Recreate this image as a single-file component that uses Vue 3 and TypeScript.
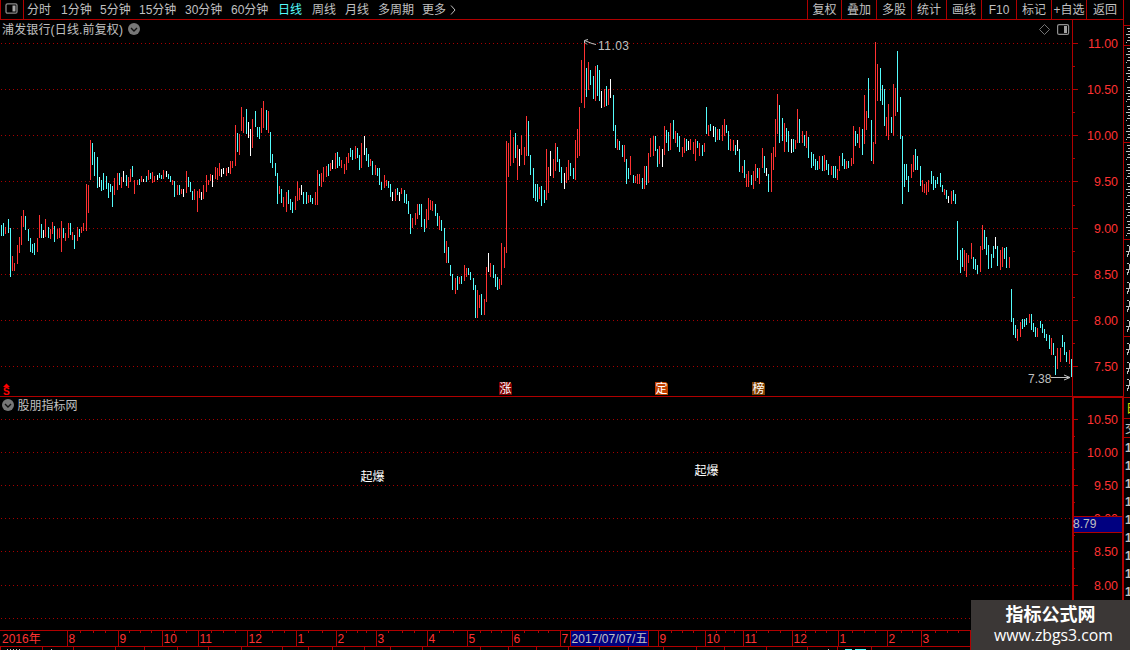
<script setup lang="ts">
interface Label { x: number; text: string }
type Tone = 'r' | 'c' | 'w'

// Each bar: x, high, low, tone
const series = `1 225 236 c,3 223 236 c,5 227 234 r,8 219 233 c,10 228 277 c,12 256 271 r,14 263 271 r,17 245 264 r,19 237 253 r,21 216 245 r,23 210 227 r,25 216 230 c,28 229 241 c,30 238 252 c,32 244 253 c,34 243 255 c,37 238 252 r,39 215 238 r,41 224 238 c,43 230 238 w,45 219 237 r,48 227 238 c,50 229 239 r,52 222 234 r,54 226 242 c,57 229 239 r,59 228 238 r,61 221 252 r,63 228 238 c,65 233 241 r,68 223 238 r,70 223 235 c,72 232 240 r,74 235 249 c,77 227 241 r,79 229 237 c,81 227 233 r,83 223 231 r,86 184 231 r,88 185 213 r,90 140 180 r,92 143 165 c,94 152 176 c,97 157 188 c,99 177 187 w,101 180 191 c,103 173 190 c,106 176 189 c,108 183 198 c,110 184 192 c,112 186 207 c,114 178 195 r,117 173 190 r,119 173 185 c,121 177 188 r,123 171 182 w,126 175 186 c,128 177 188 r,130 169 182 r,132 166 177 c,134 180 194 r,137 180 185 r,139 179 185 c,141 176 182 r,143 179 182 w,146 176 182 c,148 170 180 r,150 173 179 c,152 172 183 r,154 176 182 r,157 175 180 w,159 173 178 c,161 175 179 c,163 170 179 r,166 171 177 w,168 174 179 c,170 176 182 c,172 180 185 r,174 181 197 c,177 185 195 r,179 185 195 c,181 189 194 r,183 189 197 w,186 171 193 r,188 177 187 c,190 182 192 c,192 191 200 c,194 189 200 r,197 191 212 r,199 189 198 r,201 192 200 w,203 185 199 r,206 175 192 r,208 180 185 r,210 174 181 r,212 175 187 w,215 167 179 r,217 168 180 r,219 163 176 r,221 169 177 w,223 168 174 w,226 168 176 r,228 167 173 w,230 161 174 r,232 161 168 r,235 125 166 r,237 133 152 c,239 134 155 r,
241 107 131 r,243 117 133 r,246 109 134 c,248 122 138 w,250 129 156 w,252 119 148 r,255 111 127 c,257 127 137 c,259 127 139 c,261 108 133 r,263 101 128 r,266 110 130 c,268 111 133 r,270 132 163 c,272 154 168 c,275 163 176 c,277 173 204 c,279 186 194 r,281 189 203 c,283 197 207 r,286 192 212 r,288 190 204 c,290 199 210 c,292 202 213 c,295 196 210 r,297 181 201 r,299 188 200 r,301 185 195 w,303 192 204 c,306 192 204 c,308 195 203 r,310 195 202 c,312 198 204 c,315 192 205 r,317 170 205 r,319 174 186 c,321 173 187 r,323 167 182 r,326 166 177 r,328 164 176 c,330 163 171 r,332 160 169 w,335 153 169 r,337 152 168 c,339 157 166 c,341 160 168 r,344 164 174 r,346 157 170 r,348 153 163 r,350 148 157 c,352 150 160 c,355 146 159 r,357 148 158 c,359 155 170 c,361 143 168 r,364 136 155 w,366 148 161 c,368 154 167 c,370 159 166 r,372 161 175 c,375 165 175 r,377 168 176 c,379 168 185 c,381 182 190 c,384 175 188 r,386 180 186 r,388 181 188 c,390 184 197 c,392 192 201 w,395 189 201 r,397 188 195 c,399 192 201 w,401 188 194 r,404 190 203 c,406 194 204 c,408 201 214 c,410 214 234 c,412 218 228 r,415 213 225 r,417 204 219 r,419 204 215 c,421 204 227 c,424 219 232 c,426 209 228 r,428 198 220 r,430 200 210 r,432 201 211 r,435 204 216 c,437 213 226 c,439 216 230 r,441 220 231 c,444 228 253 c,
446 241 263 r,448 247 263 c,450 265 276 c,452 274 290 c,455 278 294 r,457 276 290 c,459 277 284 r,461 276 284 c,464 265 281 r,466 268 277 r,468 268 275 c,470 272 280 c,473 278 290 c,475 285 318 c,477 290 318 r,479 295 308 r,481 294 315 c,484 299 315 r,486 267 302 r,488 253 272 w,490 263 277 r,493 265 278 c,495 274 287 c,497 277 290 c,499 279 289 r,501 243 285 r,504 247 268 r,506 141 253 r,508 143 177 r,510 130 166 r,513 137 163 r,515 133 158 c,517 145 180 r,519 149 166 w,521 135 155 r,524 147 165 r,526 116 156 r,528 121 156 c,530 155 175 c,533 168 198 c,535 184 201 c,537 184 202 c,539 187 199 r,541 186 206 c,544 190 203 c,546 149 200 r,548 167 193 r,550 151 176 w,553 159 178 r,555 143 171 r,557 147 162 c,559 159 172 c,561 167 183 c,564 173 189 w,566 167 183 r,568 160 180 r,570 163 176 c,573 168 179 c,575 140 180 r,577 129 158 r,579 107 156 r,
581 60 103 r,584 41 108 r,586 68 97 c,588 62 90 r,590 70 85 c,593 76 99 c,595 66 101 r,597 65 96 c,599 70 101 c,601 91 108 w,604 89 107 r,606 86 106 c,608 89 105 r,610 79 98 w,613 95 131 c,615 125 148 c,617 139 150 r,619 141 150 c,622 145 157 c,624 145 162 r,626 159 184 c,628 168 179 c,630 156 175 r,633 175 183 c,635 176 183 r,637 174 184 r,639 174 184 r,642 178 189 c,644 166 189 r,646 166 185 c,648 153 183 r,650 138 157 r,653 136 156 r,655 136 151 c,657 149 167 c,659 146 164 r,662 149 167 w,664 126 155 r,666 130 143 c,668 132 151 c,670 123 150 r,673 120 139 c,675 131 143 r,677 133 147 c,679 136 152 c,682 147 157 r,684 138 153 r,686 139 151 c,688 141 150 w,690 139 150 r,693 142 154 r,695 139 161 r,697 141 148 c,699 143 156 r,702 145 156 c,704 143 152 r,706 107 134 c,708 125 136 r,710 124 131 c,713 126 137 w,715 127 142 c,717 129 140 r,719 129 140 c,722 125 141 r,724 119 136 r,726 125 133 c,728 131 150 c,730 139 151 r,733 140 151 r,735 145 155 c,737 140 151 w,739 149 172 c,742 166 173 r,744 160 178 c,746 174 187 r,748 171 187 r,751 175 185 c,753 171 189 r,755 164 181 r,757 168 178 c,759 168 184 r,762 148 168 r,764 156 173 c,766 168 176 w,768 174 192 c,771 153 192 r,773 147 170 r,775 119 157 r,777 94 134 r,779 105 143 c,
782 118 141 c,784 123 152 r,786 128 142 c,788 131 152 c,791 139 153 w,793 139 152 c,795 140 149 r,797 109 143 r,799 119 143 c,802 131 143 r,804 135 146 c,806 131 148 r,808 137 158 c,811 152 168 c,813 154 166 c,815 159 170 c,817 161 170 c,819 156 169 r,822 156 171 c,824 155 171 r,826 160 170 c,828 164 175 c,831 166 175 r,833 166 178 c,835 166 178 c,837 169 180 r,839 156 171 r,842 153 166 c,844 159 169 c,846 161 169 r,848 161 168 c,851 158 166 r,853 126 164 r,855 131 146 c,857 134 143 c,859 127 148 r,862 129 155 c,864 95 144 r,866 111 130 r,868 78 118 c,871 120 161 c,873 142 164 r,875 42 144 r,877 64 101 r,880 68 101 c,882 85 105 c,884 89 126 c,886 117 136 r,888 104 140 r,891 117 133 c,893 84 136 r,895 88 116 r,897 51 112 c,900 97 139 c,902 136 204 c,904 164 187 c,906 164 180 c,908 176 192 c,911 164 178 r,913 155 172 r,915 149 170 c,917 156 170 c,920 166 186 c,922 180 192 r,924 184 193 r,926 182 195 r,928 180 192 r,931 171 184 c,933 176 190 c,935 180 188 c,937 177 184 c,940 173 187 c,942 185 192 c,944 189 195 r,946 190 199 c,948 196 203 w,951 191 204 r,953 190 201 c,955 194 204 c,
957 221 260 c,960 250 273 c,962 248 267 c,964 250 271 r,966 253 277 r,968 255 263 r,971 243 259 r,973 257 269 c,975 259 270 c,977 265 274 c,980 246 272 r,982 225 250 r,984 230 249 c,986 237 255 c,988 245 269 c,991 254 268 c,993 246 258 c,995 237 249 w,997 246 266 c,1000 250 270 r,1002 247 267 r,1004 248 259 c,1006 247 268 c,1009 257 268 r,1011 289 322 c,1013 318 335 c,1015 325 338 c,1017 329 341 r,1020 322 337 r,1022 319 329 c,1024 319 327 c,1026 318 325 c,1029 314 323 r,1031 314 330 c,1033 323 332 c,1035 327 337 c,1037 328 337 r,1040 321 328 c,1042 324 333 c,1044 329 338 c,1046 334 341 c,1049 335 349 c,1051 338 355 r,1053 343 355 c,1055 356 375 c,1057 348 369 r,1060 348 362 r,1062 335 347 c,1064 342 355 c,1066 352 362 c,1069 350 364 r,1071 359 377 c`
const bars = series.split(',').map(s => {
  const [x, y1, y2, tone] = s.trim().split(' ')
  return { x: Number(x), y1: Number(y1), y2: Number(y2), tone: tone as Tone }
})
const barPath = (tone: Tone): string =>
  bars.filter(b => b.tone === tone).map(b => `M${b.x} ${b.y1}h1V${b.y2}h-1z`).join('')

const tones: Tone[] = ['r', 'c', 'w']
const periods = ['分时', '1分钟', '5分钟', '15分钟', '30分钟', '60分钟', '日线', '周线', '月线', '多周期', '更多']
const tools = ['复权', '叠加', '多股', '统计', '画线', 'F10', '标记', '+自选', '返回']

const upperGrid = [43, 89, 135, 181, 228, 274, 320, 366]
const upperPrices = ['11.00', '10.50', '10.00', '9.50', '9.00', '8.50', '8.00', '7.50']
const lowerGrid = [419, 452, 485, 518, 551, 585, 618]
const lowerPrices = ['10.50', '10.00', '9.50', '9.00', '8.50', '8.00']
const minorTicks = [66, 112, 158, 205, 251, 297, 343, 436, 469, 502, 535, 568]

const months: Label[] = [
  { x: 67, text: '8' }, { x: 118, text: '9' }, { x: 162, text: '10' }, { x: 198, text: '11' },
  { x: 247, text: '12' }, { x: 296, text: '1' }, { x: 336, text: '2' }, { x: 376, text: '3' },
  { x: 427, text: '4' }, { x: 467, text: '5' }, { x: 512, text: '6' }, { x: 560, text: '7' },
  { x: 658, text: '9' }, { x: 705, text: '10' }, { x: 743, text: '11' }, { x: 792, text: '12' },
  { x: 838, text: '1' }, { x: 887, text: '2' }, { x: 921, text: '3' },
]
const weekTicks = [80, 93, 105, 129, 140, 151, 174, 186, 211, 223, 235, 260, 272, 284, 308, 322, 346, 357, 366, 388, 402, 414, 439, 453, 480, 491, 501, 524, 538, 548, 671, 682, 693, 716, 725, 734, 756, 768, 780, 805, 815, 826, 852, 864, 875, 901, 912, 935, 947, 958]
const tabTicks = [0, 42, 73, 115, 144, 177, 208, 241, 282, 308, 332, 364, 390, 422, 480, 508, 536, 568, 599, 628, 663, 696, 724, 766, 807, 837, 871]
const sideRules = [25, 45, 142, 239, 336, 397, 418, 437]
const sideOnes = [452, 470, 488, 506, 524, 542, 560, 578, 596]
// Visible slivers of the quote panel's row captions
const captionRows = [28, 48, 67, 87, 106, 125, 145, 164, 183, 203, 221]
const looseRows = [245, 263, 282, 300, 320, 343, 362, 379]
</script>

<template>
  <div class="terminal">
    <header class="toolbar">
      <div class="layout-toggle">
        <svg width="13" height="11" viewBox="0 0 13 11">
          <rect x="1" y=".8" width="11" height="9.4" rx="1.5" fill="none" stroke="#8a8a8a" stroke-width="1.3" />
          <rect x="7.5" y="2.5" width="3" height="6" fill="#a8a8a8" />
        </svg>
      </div>
      <nav class="periods">
        <span v-for="p in periods" :key="p" :class="{ active: p === '日线' }">{{ p }}<svg v-if="p === '更多'" width="8" height="10" viewBox="0 0 8 10"><path d="M2 .5L6 5L2 9.5" fill="none" stroke="#c0c0c0" /></svg></span>
      </nav>
      <nav class="tools">
        <span v-for="t in tools" :key="t">{{ t }}</span>
      </nav>
    </header>

    <svg class="chart" width="1130" height="630" viewBox="0 20 1130 630">
      <g class="grid" shape-rendering="crispEdges">
        <path v-for="y in upperGrid" :key="y" :d="`M1 ${y + 0.5}H1072`" />
        <path v-for="y in lowerGrid" :key="y" :d="`M1 ${y + 0.5}H1072`" />
      </g>
      <g shape-rendering="crispEdges">
        <path v-for="t in tones" :key="t" :class="'bar-' + t" :d="barPath(t)" />
      </g>

      <g class="frame" shape-rendering="crispEdges">
        <path d="M0 396.5H1123M1072.5 20V397M1123.5 20V397M0 630.5H971M0 646.5H971M970.5 630V650" />
        <path class="thick" d="M1073 631V397H1123V631" />
        <path v-for="y in upperGrid" :key="y" :d="`M1073 ${y + 0.5}h5`" />
        <path v-for="y in lowerGrid" :key="y" :d="`M1074 ${y + 0.5}h4`" />
        <path v-for="y in minorTicks" :key="y" :d="`M1073 ${y + 0.5}h2`" />
        <path v-for="m in months" :key="m.x" :d="`M${m.x + 0.5} 631v15`" />
        <path v-for="x in weekTicks" :key="x" :d="`M${x + 0.5} 631v2`" />
        <path v-for="x in tabTicks" :key="x" :d="`M${x + 0.5} 647v3`" />
        <path v-for="y in sideRules" :key="y" :d="`M1124 ${y + 0.5}h6`" />
      </g>

      <g class="price">
        <text v-for="(p, i) in upperPrices" :key="p" x="1118" :y="upperGrid[i] + 5">{{ p }}</text>
        <text v-for="(p, i) in lowerPrices" :key="p" x="1118" :y="lowerGrid[i] + 5">{{ p }}</text>
      </g>
      <g shape-rendering="crispEdges">
        <rect x="1074" y="516" width="48" height="17" fill="#b00000" />
        <rect x="1074" y="517" width="48" height="15" fill="#000080" />
      </g>
      <text class="note" x="1073" y="528">8.79</text>

      <text class="note" x="2" y="34" textLength="121" lengthAdjust="spacing">浦发银行(日线.前复权)</text>
      <g v-for="c in [{ x: 134, y: 29 }, { x: 8, y: 405 }]" :key="c.x">
        <circle :cx="c.x" :cy="c.y" r="6" fill="#777" />
        <path :d="`M${c.x - 3} ${c.y - 1}l3 3l3 -3`" fill="none" stroke="#111" stroke-width="1.4" />
      </g>
      <path d="M1044.5 24.5l5 5l-5 5l-5 -5z" fill="none" stroke="#808080" stroke-width=".9" />
      <rect x="1057.6" y="24.6" width="11" height="9.8" rx="1.5" fill="none" stroke="#909090" stroke-width="1.2" />
      <rect x="1064" y="26" width="3" height="7" fill="#a0a0a0" />

      <path class="arrow" d="M596 44.5L592 43.5L584.5 40.5M584.5 43V40.5L588 39.5M585 42.5l2 2" />
      <text class="note" x="598" y="50" textLength="31" lengthAdjust="spacing">11.03</text>
      <text class="note" x="1028" y="383">7.38</text>
      <path class="arrow" d="M1051 377.5H1070M1064 375L1070 377.5L1064 380" />

      <path d="M3 387L6.5 383.5L10 387z" fill="#f00" />
      <text class="dollar" x="3" y="395">S</text>
      <g class="badge">
        <path d="M499 382h11l2 2v11h-13z" fill="#800000" />
        <path d="M655 382h11l2 2v11h-13z" fill="#c04000" />
        <path d="M752 382h11l2 2v11h-13z" fill="#804000" />
        <text x="499.5" y="393">涨</text>
        <text x="655.5" y="393">定</text>
        <text x="752.5" y="393">榜</text>
      </g>

      <text class="note" x="17.5" y="410">股朋指标网</text>
      <text class="signal" x="360.5" y="481">起爆</text>
      <text class="signal" x="694.5" y="475">起爆</text>

      <g class="months">
        <text x="2" y="643">2016年</text>
        <text v-for="m in months" :key="m.x" :x="m.x + 1.5" y="643">{{ m.text }}</text>
      </g>
      <rect x="570.5" y="630.5" width="78" height="16" fill="#000080" stroke="#b00000" />
      <text class="note" x="571.5" y="642.5" textLength="76" lengthAdjust="spacing">2017/07/07/五</text>

      <g class="sliver" shape-rendering="crispEdges">
        <path v-for="y in captionRows" :key="y" :d="`M1127 ${y + 0.5}h3M1128 ${y + 3.5}h2M1126 ${y + 6.5}h4M1128 ${y + 9.5}h2M1127 ${y + 12.5}h3M1126 ${y + 14.5}h1`" />
        <path v-for="y in looseRows" :key="y" :d="`M1127 ${y + 0.5}h2M1129.5 ${y + 1}v5M1126 ${y + 6.5}h4M1128.5 ${y + 7}v3M1127.5 ${y + 9}v3`" />
      </g>
      <g class="side">
        <text class="yellow" x="1126" y="413">日</text>
        <text x="1125" y="433">交</text>
        <text v-for="y in sideOnes" :key="y" class="one" x="1125" :y="y">1</text>
      </g>
      <g class="sliver" shape-rendering="crispEdges">
        <path d="M7 649.5h1M10 649.5h1M13 649.5h1M16 649.5h1M19 649.5h1M51 649.5h1M828 649.5h1" />
        <path class="cyan" d="M845 649.5h7M855 649.5h11" />
      </g>
    </svg>

    <aside class="watermark">
      <strong>指标公式网</strong>
      <span>www.zbgs3.com</span>
    </aside>
  </div>
</template>

<style>
body { background: #000; overflow: hidden; }
</style>

<style scoped>
.terminal {
  position: relative;
  width: 1130px;
  height: 650px;
  overflow: hidden;
  background: #000;
  color: #c0c0c0;
  font: 12px/16px "Liberation Sans", "Noto Sans CJK SC", sans-serif;
}
.toolbar {
  display: flex;
  box-sizing: border-box;
  width: 1124px;
  height: 20px;
  border-bottom: 1px solid #b00000;
  border-right: 1px solid #b00000;
  white-space: nowrap;
}
.layout-toggle {
  box-sizing: border-box;
  width: 24px;
  padding: 3px 0 0 4px;
  border-left: 1px solid #b00000;
  border-right: 1px solid #b00000;
  line-height: 0;
}
.periods {
  display: grid;
  grid-template-columns: 34px 39px 39px 46px 46px 47px 34px 33px 33px 44px 40px;
  margin-left: 3px;
  padding-top: 2px;
}
.periods svg { margin-left: 3px; vertical-align: -1px; }
.active { color: #54fcfc; }
.tools {
  display: grid;
  grid-template-columns: 34px repeat(7, 35px) 37px;
  margin-left: auto;
}
.tools span {
  border-left: 1px solid #b00000;
  padding-top: 2px;
  text-align: center;
}
.chart { display: block; }
.grid path { stroke: #a80000; stroke-dasharray: 1 3; }
.bar-r { fill: #ff3232; }
.bar-c { fill: #54fcfc; }
.bar-w { fill: #fff; }
.frame path { fill: none; stroke: #b00000; }
.frame .thick { stroke-width: 2; }
text { font-size: 12px; }
.price text { fill: #ff3232; text-anchor: end; font-size: 12.4px; }
.note { fill: #c0c0c0; }
.arrow, .sliver path { fill: none; stroke: #c0c0c0; }
.sliver .cyan { stroke: #54fcfc; }
.dollar { fill: #f00; font-size: 10px; font-weight: bold; }
.badge text, .signal { fill: #fff; }
.months text { fill: #ff3232; }
.side text { fill: #c0c0c0; }
.side .yellow { fill: #e0e000; }
.side .one { font-weight: bold; }
.watermark {
  position: absolute;
  right: 0;
  bottom: 0;
  display: flex;
  flex-direction: column;
  align-items: center;
  width: 159px;
  height: 50px;
  background: #3b3736;
  color: #fff;
}
.watermark strong { margin-top: 4px; font-size: 18px; line-height: 22px; }
.watermark span { margin-left: 6px; font: 15.8px/19px "Open Sans", sans-serif; }
</style>
